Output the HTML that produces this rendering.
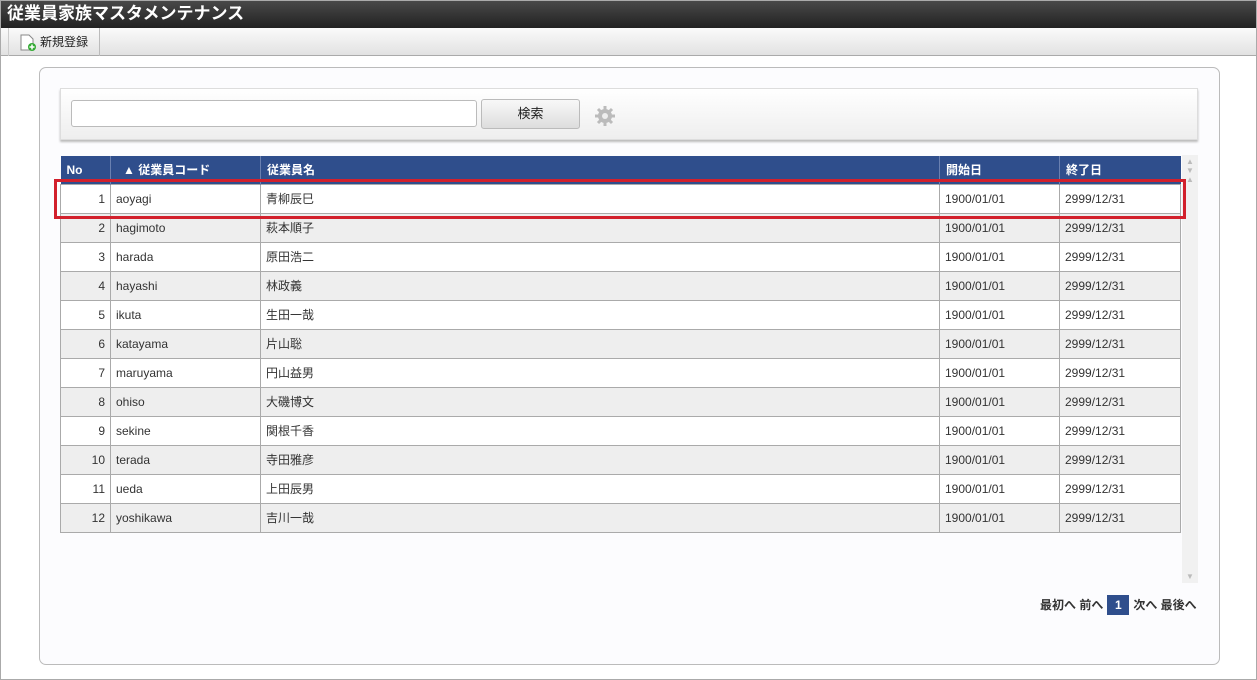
<!DOCTYPE html>
<html><head><meta charset="utf-8"><style>
*{box-sizing:border-box;margin:0;padding:0}
body{width:1257px;height:680px;background:#fff;font-family:"Liberation Sans","Noto Sans CJK JP",sans-serif;position:relative;overflow:hidden}
.frame{position:absolute;left:0;top:0;width:1257px;height:680px;border:1px solid #aaa}
.title{position:absolute;left:0;top:0;width:1257px;height:28px;background:linear-gradient(#4a4a4a,#222);color:#fff;font-weight:bold;font-size:17px;line-height:28px;padding-left:7px}
.tool{position:absolute;left:0;top:28px;width:1257px;height:28px;background:linear-gradient(#fafafa,#e2e2e2);border-bottom:1px solid #aaa}
.tbtn{position:absolute;left:8px;top:0;height:28px;width:92px;border-left:1px solid #ccc;border-right:1px solid #bbb;font-size:12px;line-height:28px;padding-left:31px;color:#222}
.panel{position:absolute;left:39px;top:67px;width:1181px;height:598px;border:1px solid #bbb;border-radius:7px;background:#fcfcfe}
.sbar{position:absolute;left:60px;top:88px;width:1138px;height:52px;border:1px solid #ddd;background:linear-gradient(#fff,#eee);box-shadow:0 2px 2px #bbb}
.inp{position:absolute;left:71px;top:100px;width:406px;height:27px;border:1px solid #bbb;border-radius:3px;background:#fff}
.btn{position:absolute;left:481px;top:99px;width:99px;height:30px;border:1px solid #bbb;border-radius:3px;background:linear-gradient(#f8f8f8,#ddd);font-size:13px;text-align:center;line-height:28px;color:#222}
table{position:absolute;left:60px;top:156px;border-collapse:collapse;font-size:12px;color:#333}
th{background:#2f4e8c;color:#fff;font-weight:bold;text-align:left;height:28px;padding-left:6px;border-left:1px solid #6a80b0}
td{height:29px;border:1px solid #aaa;padding-left:5px}
tr:nth-child(odd) td{background:#eee}
tr:nth-child(even) td{background:#fff}
td.n{text-align:right;padding-right:5px}
.sc{position:absolute;left:1182px;top:155px;width:16px;height:428px;background:#f1f1f1;color:#bbb;font-size:8px;text-align:center}
.red{position:absolute;left:54px;top:179px;width:1132px;height:40px;border:3px solid #d2202c}
.pg{position:absolute;left:1040px;top:595px;font-size:12px;font-weight:bold;color:#333;line-height:20px}
.pg b{display:inline-block;background:#2f4e8c;color:#fff;width:22px;text-align:center;margin:0 4px}
</style></head><body>
<div class="title">従業員家族マスタメンテナンス</div>
<div class="tool"><div class="tbtn"><svg style="position:absolute;left:11px;top:6px" width="16" height="17"><path d="M1 1h8l4 4v11H1z" fill="#fff" stroke="#888"/><circle cx="12" cy="13" r="4" fill="#3a3"/><path d="M12 10.5v5M9.5 13h5" stroke="#fff" stroke-width="1.5"/></svg>新規登録</div></div>
<div class="panel"></div>
<div class="sbar"></div>
<div class="inp"></div>
<div class="btn">検索</div>
<svg style="position:absolute;left:594px;top:105px" width="22" height="22" viewBox="0 0 22 22"><g fill="#bbb"><circle cx="11" cy="11" r="7"/><g stroke="#bbb" stroke-width="3"><path d="M11 1v20M1 11h20M4 4l14 14M18 4L4 18"/></g></g><circle cx="11" cy="11" r="3" fill="#eee"/></svg>
<table>
<tr><th style="width:50px;border-left:none">No</th><th style="width:150px;padding-left:12px">▲ 従業員コード</th><th style="width:679px">従業員名</th><th style="width:120px">開始日</th><th style="width:121px">終了日</th></tr>
<tr><td class="n">1</td><td>aoyagi</td><td>青柳辰巳</td><td>1900/01/01</td><td>2999/12/31</td></tr>
<tr><td class="n">2</td><td>hagimoto</td><td>萩本順子</td><td>1900/01/01</td><td>2999/12/31</td></tr>
<tr><td class="n">3</td><td>harada</td><td>原田浩二</td><td>1900/01/01</td><td>2999/12/31</td></tr>
<tr><td class="n">4</td><td>hayashi</td><td>林政義</td><td>1900/01/01</td><td>2999/12/31</td></tr>
<tr><td class="n">5</td><td>ikuta</td><td>生田一哉</td><td>1900/01/01</td><td>2999/12/31</td></tr>
<tr><td class="n">6</td><td>katayama</td><td>片山聡</td><td>1900/01/01</td><td>2999/12/31</td></tr>
<tr><td class="n">7</td><td>maruyama</td><td>円山益男</td><td>1900/01/01</td><td>2999/12/31</td></tr>
<tr><td class="n">8</td><td>ohiso</td><td>大磯博文</td><td>1900/01/01</td><td>2999/12/31</td></tr>
<tr><td class="n">9</td><td>sekine</td><td>関根千香</td><td>1900/01/01</td><td>2999/12/31</td></tr>
<tr><td class="n">10</td><td>terada</td><td>寺田雅彦</td><td>1900/01/01</td><td>2999/12/31</td></tr>
<tr><td class="n">11</td><td>ueda</td><td>上田辰男</td><td>1900/01/01</td><td>2999/12/31</td></tr>
<tr><td class="n">12</td><td>yoshikawa</td><td>吉川一哉</td><td>1900/01/01</td><td>2999/12/31</td></tr>
</table>
<div class="sc"><div style="margin-top:2px">▲</div><div>▼</div><div>▲</div><div style="position:absolute;bottom:2px;width:16px">▼</div></div>
<div class="red"></div>
<div class="pg">最初へ 前へ<b>1</b>次へ 最後へ</div>
<div class="frame"></div>
</body></html>
